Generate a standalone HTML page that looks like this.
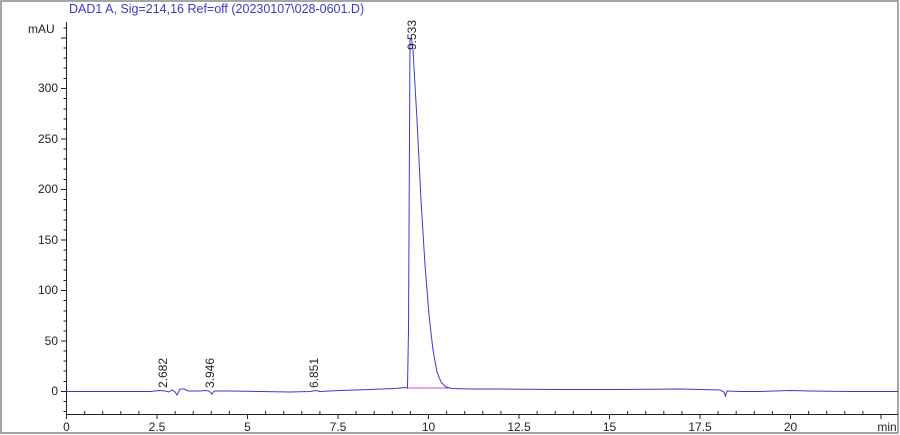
<!DOCTYPE html>
<html><head><style>
html,body{margin:0;padding:0;background:#fff;width:900px;height:435px;overflow:hidden}
svg{display:block}
text{font-family:"Liberation Sans",Arial,sans-serif}
</style></head><body>
<svg width="900" height="435" viewBox="0 0 900 435" xmlns="http://www.w3.org/2000/svg">
<rect x="1" y="1" width="897" height="432" fill="#fff" stroke="#888" stroke-width="1.5"/>
<text x="69" y="13" font-size="12.5" fill="#3a3ad0">DAD1 A, Sig=214,16 Ref=off (20230107\028-0601.D)</text>
<text x="28" y="33" font-size="12" fill="#222">mAU</text>
<g stroke="#222" stroke-width="1" fill="none">
<line x1="66.5" y1="22" x2="66.5" y2="414"/>
<line x1="66.5" y1="414.5" x2="898" y2="414.5"/>
<path d="M61 391.5H66.5M61 341H66.5M61 290.5H66.5M61 240H66.5M61 189.5H66.5M61 139H66.5M61 88.5H66.5M61 38H66.5
M63.5 411.5H66.5M63.5 401.5H66.5M63.5 381.5H66.5M63.5 371H66.5M63.5 361H66.5M63.5 351H66.5M63.5 331H66.5M63.5 321H66.5M63.5 311H66.5M63.5 300.5H66.5
M63.5 280.5H66.5M63.5 270H66.5M63.5 260H66.5M63.5 250H66.5M63.5 230H66.5M63.5 220H66.5M63.5 210H66.5M63.5 199.5H66.5
M63.5 179.5H66.5M63.5 169H66.5M63.5 159H66.5M63.5 149H66.5M63.5 129H66.5M63.5 119H66.5M63.5 109H66.5M63.5 98.5H66.5
M63.5 78.5H66.5M63.5 68H66.5M63.5 58H66.5M63.5 48H66.5M63.5 28H66.5"/>
<path d="M66.5 414v5M157 414v5M247.5 414v5M338 414v5M428.5 414v5M519 414v5M609.5 414v5M700 414v5M790.5 414v5M881 414v5
M84.6 414v-3M102.7 414v-3M120.8 414v-3M138.9 414v-3M175.1 414v-3M193.2 414v-3M211.3 414v-3M229.4 414v-3M265.6 414v-3M283.7 414v-3M301.8 414v-3M319.9 414v-3M356.1 414v-3M374.2 414v-3M392.3 414v-3M410.4 414v-3M446.6 414v-3M464.7 414v-3M482.8 414v-3M500.9 414v-3M537.1 414v-3M555.2 414v-3M573.3 414v-3M591.4 414v-3M627.6 414v-3M645.7 414v-3M663.8 414v-3M681.9 414v-3M718.1 414v-3M736.2 414v-3M754.3 414v-3M772.4 414v-3M808.6 414v-3M826.7 414v-3M844.8 414v-3M862.9 414v-3"/>
</g>
<g font-size="12" fill="#222" text-anchor="end">
<text x="58" y="395">0</text><text x="58" y="345">50</text><text x="58" y="294">100</text><text x="58" y="244">150</text><text x="58" y="193">200</text><text x="58" y="143">250</text><text x="58" y="92">300</text>
</g>
<g font-size="12" fill="#222" text-anchor="middle">
<text x="66.5" y="431">0</text><text x="157" y="431">2.5</text><text x="247.5" y="431">5</text><text x="338" y="431">7.5</text><text x="428.5" y="431">10</text><text x="519" y="431">12.5</text><text x="609.5" y="431">15</text><text x="700" y="431">17.5</text><text x="790.5" y="431">20</text><text x="887" y="431">min</text>
</g>
<line x1="408" y1="388" x2="450" y2="388" stroke="#e040e0" stroke-width="1"/>
<path d="M66.5 391.5 L150 391.5 L160 390.5 L165 391 L169 392 L172 390 L175 392 L177 395 L180 389 L184 389 L188 391 L200 391 L205 390.5 L209 391 L212 394 L214 391 L230 391 L260 391.5 L290 392 L310 391.5 L316 390.5 L320 391.5 L340 390.5 L370 389.5 L395 388.5 L405 387.5 L407.5 388 L408.5 330 L410 40 L411.5 38 L413 50 L417 120 L421 200 L425 265 L429 315 L433 350 L437 372 L441 382 L446 387 L452 388.5 L470 389 L500 389 L560 389.5 L620 389.5 L680 389 L720 390 L724 392 L725.5 396 L727 391 L740 391.5 L760 391.5 L790 390.5 L810 391 L850 391.5 L898 391.5" fill="none" stroke="#3a3ad0" stroke-width="1"/>
<g font-size="12" fill="#222">
<text transform="translate(167,388) rotate(-90)">2.682</text>
<text transform="translate(214,388) rotate(-90)">3.946</text>
<text transform="translate(318,388) rotate(-90)">6.851</text>
<text transform="translate(416,50) rotate(-90)">9.533</text>
</g>
</svg>
</body></html>
